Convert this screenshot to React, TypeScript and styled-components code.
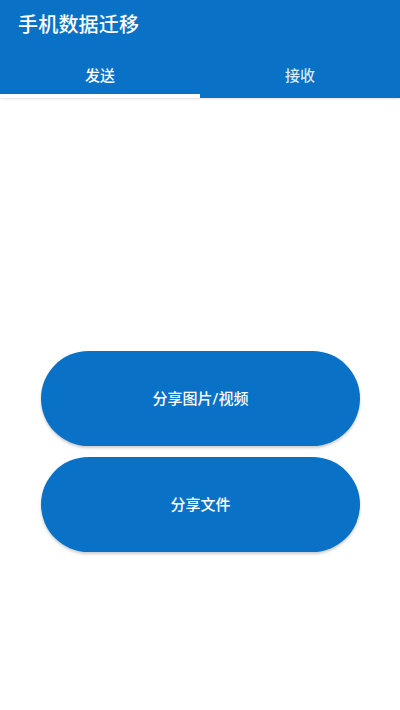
import React, { useState } from 'react';
import styled, { createGlobalStyle } from 'styled-components';

const GlobalStyle = createGlobalStyle`
  html, body {
    margin: 0;
    padding: 0;
    background: #ffffff;
    font-family: Roboto, "Noto Sans CJK SC", sans-serif;
  }
`;

const Page = styled.div`
  width: 400px;
  height: 710px;
  display: flex;
  flex-direction: column;
  background: #ffffff;
`;

const Header = styled.header`
  background-color: #0a72c6;
  display: flex;
  flex-direction: column;
  box-shadow: 0 1px 2px rgba(0, 0, 0, 0.12);
`;

const Title = styled.h1`
  margin: 0;
  height: 46px;
  padding: 0 18px;
  display: flex;
  align-items: center;
  color: #ffffff;
  font-size: 20px;
  font-weight: 500;
  letter-spacing: 0.2px;
`;

const Tabs = styled.nav`
  display: flex;
  height: 52px;
`;

const Tab = styled.button<{ $active: boolean }>`
  flex: 1;
  border: none;
  background: transparent;
  color: ${p => (p.$active ? '#ffffff' : 'rgba(255, 255, 255, 0.85)')};
  font-family: inherit;
  font-size: 15px;
  font-weight: 500;
  padding: 8px 0 0;
  border-bottom: 4px solid ${p => (p.$active ? '#ffffff' : 'transparent')};
  cursor: pointer;
`;

const Body = styled.main`
  flex: 1;
  display: flex;
  flex-direction: column;
  gap: 11px;
  padding: 253px 40px 0 41px;
`;

const ShareButton = styled.button`
  height: 95px;
  border: none;
  border-radius: 48px;
  background-color: #0a72c6;
  color: #ffffff;
  font-family: inherit;
  font-size: 15px;
  font-weight: 500;
  padding: 0 0 2px;
  box-shadow: 0 2px 3px rgba(0, 0, 0, 0.2);
  cursor: pointer;
`;

const App: React.FC = () => {
  const [tab, setTab] = useState(0);

  return (
    <Page>
      <GlobalStyle />
      <Header>
        <Title>手机数据迁移</Title>
        <Tabs>
          <Tab $active={tab === 0} onClick={() => setTab(0)}>发送</Tab>
          <Tab $active={tab === 1} onClick={() => setTab(1)}>接收</Tab>
        </Tabs>
      </Header>
      <Body>
        <ShareButton>分享图片/视频</ShareButton>
        <ShareButton>分享文件</ShareButton>
      </Body>
    </Page>
  );
};

export default App;
